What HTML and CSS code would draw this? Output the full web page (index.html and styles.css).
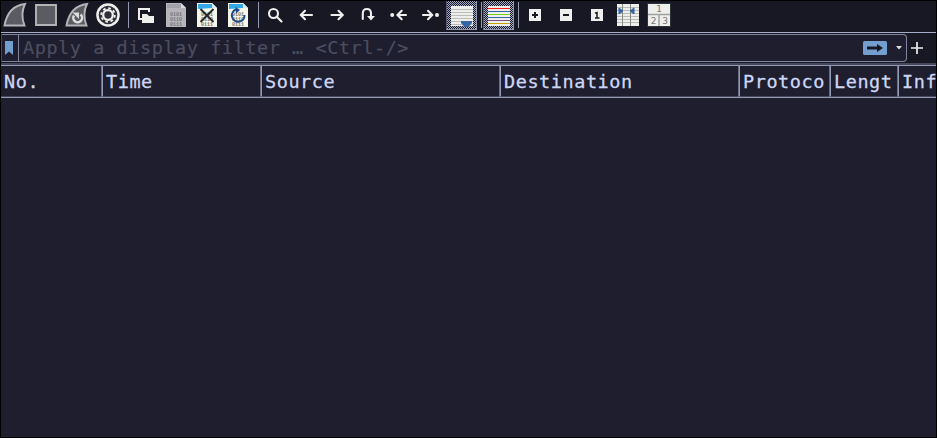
FILE: index.html
```html
<!DOCTYPE html>
<html lang="en">
<head>
<meta charset="utf-8">
<title>Capture</title>
<link rel="stylesheet" href="styles.css">
</head>
<body>
<div class="window">
<div class="toolbar">
  <span class="tool"><svg viewBox="0 0 31 30"><path class="fin" d="M4.5 25.5Q8 6 25 4Q20 14 24.500 25.500Z"/></svg></span>
  <span class="tool"><svg viewBox="0 0 31 30"><path class="fin" d="M5 5H25V25H5Z"/></svg></span>
  <span class="tool"><svg viewBox="0 0 31 30"><path class="fin" d="M4.500 25.500Q8 6 25 4Q20 14 24.500 25.500Z"/><path d="M12 15.500A4.400 4.400 0 1 0 18.500 14.500" fill="none" stroke="#ddd" stroke-width="2.500"/><path d="M10.500 12.500h6.500v6.500z" fill="#ddd"/></svg></span>
  <span class="tool"><svg viewBox="0 0 31 30"><circle cx="15" cy="15" r="11.800" fill="#efefed"/><circle cx="15" cy="15" r="9.300" fill="#303038"/><circle cx="15" cy="15" r="6.800" fill="none" stroke="#efefed" stroke-width="1.800" stroke-dasharray="2.670"/><circle cx="15" cy="15" r="4.800" fill="none" stroke="#efefed" stroke-width="2.300"/></svg></span>
  <span class="sep"></span>
  <span class="tool"><svg viewBox="0 0 31 30"><path d="M8 8h12v4h-2v-2h-8v8h2v2H8z M12 14h5l2 2h5v7H12z" fill="#efefed"/></svg></span>
  <span class="tool"><svg viewBox="0 0 31 30"><path d="M5 3H20L25 8V27H5Z" fill="#b5b5ba"/><path d="M6 4H20V8H6Z" fill="#a2a2a9"/><path d="M20 3V8H25Z" fill="#dadade"/><g class="bits bits-dim"><text x="9" y="15.500">0101</text><text x="9" y="20.500">0110</text><text x="9" y="25.500">0111</text></g></svg></span>
  <span class="tool"><svg viewBox="0 0 31 30"><path d="M5 3H20L25 8V27H5Z" fill="#f5f5e8"/><path d="M6 4H20V8L6 9Z" fill="#33a8e4"/><path d="M20 3V8H25Z" fill="#d5eefa"/><g class="bits"><text x="9" y="15.500">0101</text><text x="9" y="20.500">0110</text><text x="9" y="25.500">0111</text></g><path d="M8.500 9L21.500 22M21.500 9L8.500 22" stroke="#25282d" stroke-width="2"/></svg></span>
  <span class="tool"><svg viewBox="0 0 31 30"><path d="M5 3H20L25 8V27H5Z" fill="#f5f5e8"/><path d="M6 4H20V8L6 9Z" fill="#33a8e4"/><path d="M20 3V8H25Z" fill="#d5eefa"/><g class="bits"><text x="9" y="15.500">0101</text><text x="9" y="20.500">0110</text><text x="9" y="25.500">0111</text></g><path d="M13 9.500A6.300 6.300 0 1 0 21.500 15" fill="none" stroke="#204a87" stroke-width="2"/><path d="M12.500 7L17 10L13 13.500Z" fill="#204a87"/></svg></span>
  <span class="sep"></span>
  <span class="tool"><svg viewBox="0 0 31 30"><circle cx="13.500" cy="13.500" r="4.500" class="line"/><path class="line" d="M16.800 16.800L21.500 21.500"/></svg></span>
  <span class="tool"><svg viewBox="0 0 31 30"><path class="line" d="M21 15H10M14 10.800L9.800 15L14 19.200"/></svg></span>
  <span class="tool"><svg viewBox="0 0 31 30"><path class="line" d="M9.500 15H20.500M16.500 10.800L20.700 15L16.500 19.200"/></svg></span>
  <span class="tool"><svg viewBox="0 0 31 30"><path class="line" d="M9.800 19V13.500Q9.800 9 13.900 9T18 13.500V18"/><path d="M14 16H22L18 20.500Z" fill="#efefed"/></svg></span>
  <span class="tool"><svg viewBox="0 0 31 30"><path class="line" d="M22 15H14.500M17.700 10.800L13.500 15L17.700 19.200"/><circle cx="8.200" cy="15" r="2" fill="#efefed"/></svg></span>
  <span class="tool"><svg viewBox="0 0 31 30"><path class="line" d="M8 15H17M13 10.800L17.200 15L13 19.200"/><circle cx="22" cy="15" r="2" fill="#efefed"/></svg></span>
  <span class="tool checked"><svg viewBox="0 0 31 30"><path d="M5 6H27V26H5Z" fill="#eeeeec"/><path d="M5 9.500H27M5 12.500H27M5 15.500H27M5 18.500H27M5 21.500H27M5 24.500H27" stroke="#babdb6"/><path d="M15 21H26V23L22.500 27H18.500L15 23Z" fill="#3465a4"/></svg></span>
  <span class="sep"></span>
  <span class="tool checked"><svg viewBox="0 0 31 30"><path d="M5 6H27V26H5Z" fill="#eeeeec"/><path d="M5 8.500H27" stroke="#ff1a1a"/><path d="M5 11.500H27" stroke="#3465a4"/><path d="M5 14.500H27" stroke="#73d216"/><path d="M5 17.500H27" stroke="#3465a4"/><path d="M5 20.500H27" stroke="#75507b"/><path d="M5 23.500H27" stroke="#c4a000"/></svg></span>
  <span class="sep"></span>
  <span class="tool"><svg viewBox="0 0 31 30"><path d="M9 9H21V21H9Z" fill="#efefed"/><path d="M12 15H18M15 12V18" stroke="#181825" stroke-width="2"/></svg></span>
  <span class="tool"><svg viewBox="0 0 31 30"><path d="M9 9H21V21H9Z" fill="#efefed"/><path d="M12 15H18" stroke="#181825" stroke-width="2"/></svg></span>
  <span class="tool"><svg viewBox="0 0 31 30"><path d="M9 9H21V21H9Z" fill="#efefed"/><path d="M13 13.300L15 12.500V18M13 18H17.500" fill="none" stroke="#181825" stroke-width="1.500"/></svg></span>
  <span class="tool"><svg viewBox="0 0 31 30"><path d="M4 4H26V26H4Z" fill="#eeeeec"/><path d="M4 7.500H26M4 10.500H26M4 13.500H26M4 16.500H26M4 19.500H26M4 22.500H26" stroke="#babdb6"/><path d="M9.500 4V26M17.500 4V26" stroke="#888a85"/><path d="M6 8L10 11L6 14ZM21 8L17 11L21 14Z" fill="#3465a4" stroke="#3465a4"/></svg></span>
  <span class="tool"><svg viewBox="0 0 31 30"><path d="M3.500 3.500H26.500V26.500H3.500Z" fill="#eeeeec" stroke="#2e3436"/><path d="M4 14.500H26M15 14V26" stroke="#a0a29e" stroke-width="1.500"/><g class="panes"><text x="15" y="12.300">1</text><text x="9.500" y="23.500">2</text><text x="21" y="23.500">3</text></g></svg></span>
</div>
<div class="filterbar">
  <div class="filter">
    <span class="bookmark"><svg viewBox="0 0 17 26"><path d="M4 6H12V20L8 16.500L4 20Z" fill="#739fcf"/></svg></span>
    <span class="hint">Apply a display filter … &lt;Ctrl-/&gt;</span>
    <svg class="apply" viewBox="0 0 24 14"><rect width="24" height="14" rx="1.500" fill="#729fcf"/><path d="M4 5.500H14V3L20 7L14 11V8.500H4Z" fill="#181825"/></svg>
    <svg class="drop" viewBox="0 0 6 4"><path d="M0 0H6L3 3.500Z" fill="#dededa"/></svg>
  </div>
  <svg class="add" viewBox="0 0 12 12"><path d="M0 6H12M6 0V12" stroke="#eeeeec" stroke-width="1.700"/></svg>
</div>
<div class="columns">
  <span>No.</span><span>Time</span><span>Source</span><span>Destination</span><span>Protoco</span><span>Lengt</span><span>Inf</span>
</div>
</div>
</body>
</html>
```
FILE: styles.css
```css
* { box-sizing: border-box; }
body { margin: 0; background: #000; overflow: hidden; }
.window {
  width: 937px; height: 438px; border: 1px solid #000;
  background: #1e1e2e; overflow: hidden;
  font: 18.5px/28px "DejaVu Sans Mono", monospace;
  letter-spacing: .56px; color: #cdd6f4;
}
.toolbar { display: flex; height: 32px; margin-left: -1px; background: #181825; border-bottom: 1px solid #a6adc8; }
.tool { width: 31px; height: 30px; margin-top: -1px; flex: none; }
.tool svg { display: block; width: 31px; height: 30px; }
.sep { width: 6px; height: 26px; margin-top: 1px; flex: none; background: linear-gradient(#9399b2, #9399b2) 4px 0 / 1px 100% no-repeat; }
.checked {
  margin-top: 0; height: 29px;
  border: solid #9399b2; border-width: 0 1px 1px 0; border-left: 1px solid #585b70;
  background: repeating-conic-gradient(#a6adc8 0 25%, #181825 0 50%) 0 0 / 2px 2px;
}
.checked svg { margin: -1px 0 0 -1px; }
.fin { fill: #5b5b62; stroke: #b4b4b8; stroke-width: 1.9; }
.line { fill: none; stroke: #efefed; stroke-width: 2.1; stroke-linecap: round; }
.bits { font: bold 5px "Liberation Mono", monospace; letter-spacing: 0; fill: #777970; }
.bits-dim { fill: #77777e; }
.panes { font: 9px "DejaVu Sans", sans-serif; letter-spacing: 0; text-anchor: middle; fill: #777; }
.filterbar { display: flex; align-items: center; height: 30px; background: #181825; }
.filter {
  display: flex; align-items: center; width: 906px; height: 28px;
  border: 1px solid #7f849c; border-left-color: #45475a; border-radius: 0 4px 4px 0; background: #1e1e2e;
}
.bookmark { width: 17px; height: 26px; border-right: 1px solid #7f849c; }
.bookmark svg { display: block; width: 17px; margin-left: -1px; }
.hint { flex: 1; padding-left: 4px; color: #4b4d60; white-space: nowrap; line-height: 26px; -webkit-text-stroke: .2px; }
.apply { width: 24px; height: 14px; margin-right: 9px; }
.drop { width: 6px; height: 4px; margin-right: 4px; }
.add { width: 12px; height: 12px; margin-left: 4px; }
.columns {
  display: grid; grid-template-columns: 101px 159px 239px 239px 91px 68px 42px;
  height: 35px; padding-top: 1px;
  border-top: 2px solid #45475a; background: #9399b2;
}
.columns span {
  height: 31px; padding: 0 0 0 3px; line-height: 31px;
  border-right: 1px solid #6c7086; border-bottom: 1px solid #45475a; border-left: 1px solid #9399b2;
  background: #1e1e2e; overflow: hidden; white-space: nowrap; -webkit-text-stroke: .3px;
}
.columns span:first-child { border-left: 0; }
```
